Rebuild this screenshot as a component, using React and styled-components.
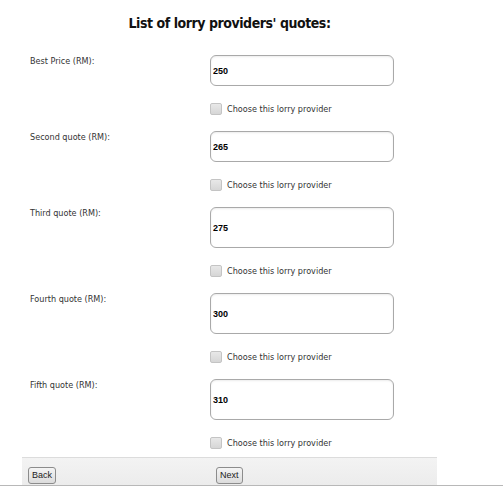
import React from 'react';
import styled, { createGlobalStyle } from 'styled-components';

const GlobalStyle = createGlobalStyle`
	html, body {
		margin: 0;
		padding: 0;
		background: #fff;
	}
	body {
		font-family: 'DejaVu Sans Condensed', 'DejaVu Sans', sans-serif;
		color: #222;
	}
`;

const Page = styled.div`
	width: 503px;
	height: 486px;
	overflow: hidden;
	display: flex;
	flex-direction: column;
`;

const Content = styled.div`
	width: 459px;
`;

const Title = styled.h2`
	margin: 0;
	padding-top: 13px;
	line-height: 20px;
	font-size: 14px;
	letter-spacing: -0.45px;
	font-weight: bold;
	text-align: center;
	color: #111;
`;

const QuoteList = styled.div`
	margin-top: 22px;
	padding-left: 30px;
`;

const QuoteBlock = styled.div`
	display: grid;
	grid-template-columns: 180px 184px;
	margin-bottom: 16px;

	&:last-child {
		margin-bottom: 8px;
	}
`;

const QuoteLabel = styled.label`
	font-size: 9px;
	line-height: 12px;
	color: #333;
`;

const Field = styled.div`
	display: flex;
	flex-direction: column;
`;

const PriceInput = styled.input`
	box-sizing: border-box;
	width: 184px;
	height: ${props => props.tall ? '41px' : '31px'};
	margin: 0;
	padding: 0 2px;
	border: 1px solid #a9a9a9;
	border-radius: 6px;
	box-shadow: inset 0 1px 2px rgba(0, 0, 0, 0.08);
	font-family: 'Liberation Sans', Arial, sans-serif;
	font-size: 9px;
	font-weight: bold;
	color: #000;
	background: #fff;
	outline: none;
`;

const CheckRow = styled.label`
	display: flex;
	align-items: center;
	gap: 5px;
	margin-top: 17px;
	height: 12px;
	font-size: 9px;
	color: #333;
`;

const CheckBox = styled.span`
	box-sizing: border-box;
	width: 12px;
	height: 12px;
	border: 1px solid #c4c4c4;
	border-radius: 2px;
	background: linear-gradient(#e8e8e8, #d6d6d6);
`;

const Footer = styled.div`
	box-sizing: border-box;
	width: 415px;
	height: 28px;
	margin-left: 22px;
	border-top: 1px solid #dcdcdc;
	background: linear-gradient(#f3f3f3, #ececec);
	display: flex;
	align-items: flex-end;
	padding: 0 0 1px 6px;
`;

const NavButton = styled.button`
	box-sizing: border-box;
	height: 17px;
	padding: 0 3px;
	margin: 0;
	margin-right: ${props => props.spaced ? '160px' : '0'};
	border: 1px solid #8c8c8c;
	border-radius: 3px;
	background: linear-gradient(#f4f4f4, #dcdcdc);
	font-family: 'Liberation Sans', Arial, sans-serif;
	font-size: 9px;
	color: #222;
	line-height: 15px;
`;

const BottomLine = styled.div`
	height: 1px;
	background: #b8b8b8;
`;

const quotes = [
	{ label: 'Best Price (RM):', value: '250', tall: false },
	{ label: 'Second quote (RM):', value: '265', tall: false },
	{ label: 'Third quote (RM):', value: '275', tall: true },
	{ label: 'Fourth quote (RM):', value: '300', tall: true },
	{ label: 'Fifth quote (RM):', value: '310', tall: true },
];

function App() {
	return (
		<Page>
			<GlobalStyle />
			<Content>
				<Title>List of lorry providers' quotes:</Title>
				<QuoteList>
					{quotes.map((quote, idx) => (
						<QuoteBlock key={idx}>
							<QuoteLabel>{quote.label}</QuoteLabel>
							<Field>
								<PriceInput tall={quote.tall} defaultValue={quote.value} />
								<CheckRow>
									<CheckBox />
									Choose this lorry provider
								</CheckRow>
							</Field>
						</QuoteBlock>
					))}
				</QuoteList>
				<Footer>
					<NavButton spaced>Back</NavButton>
					<NavButton>Next</NavButton>
				</Footer>
			</Content>
			<BottomLine />
		</Page>
	);
}

export default App;
